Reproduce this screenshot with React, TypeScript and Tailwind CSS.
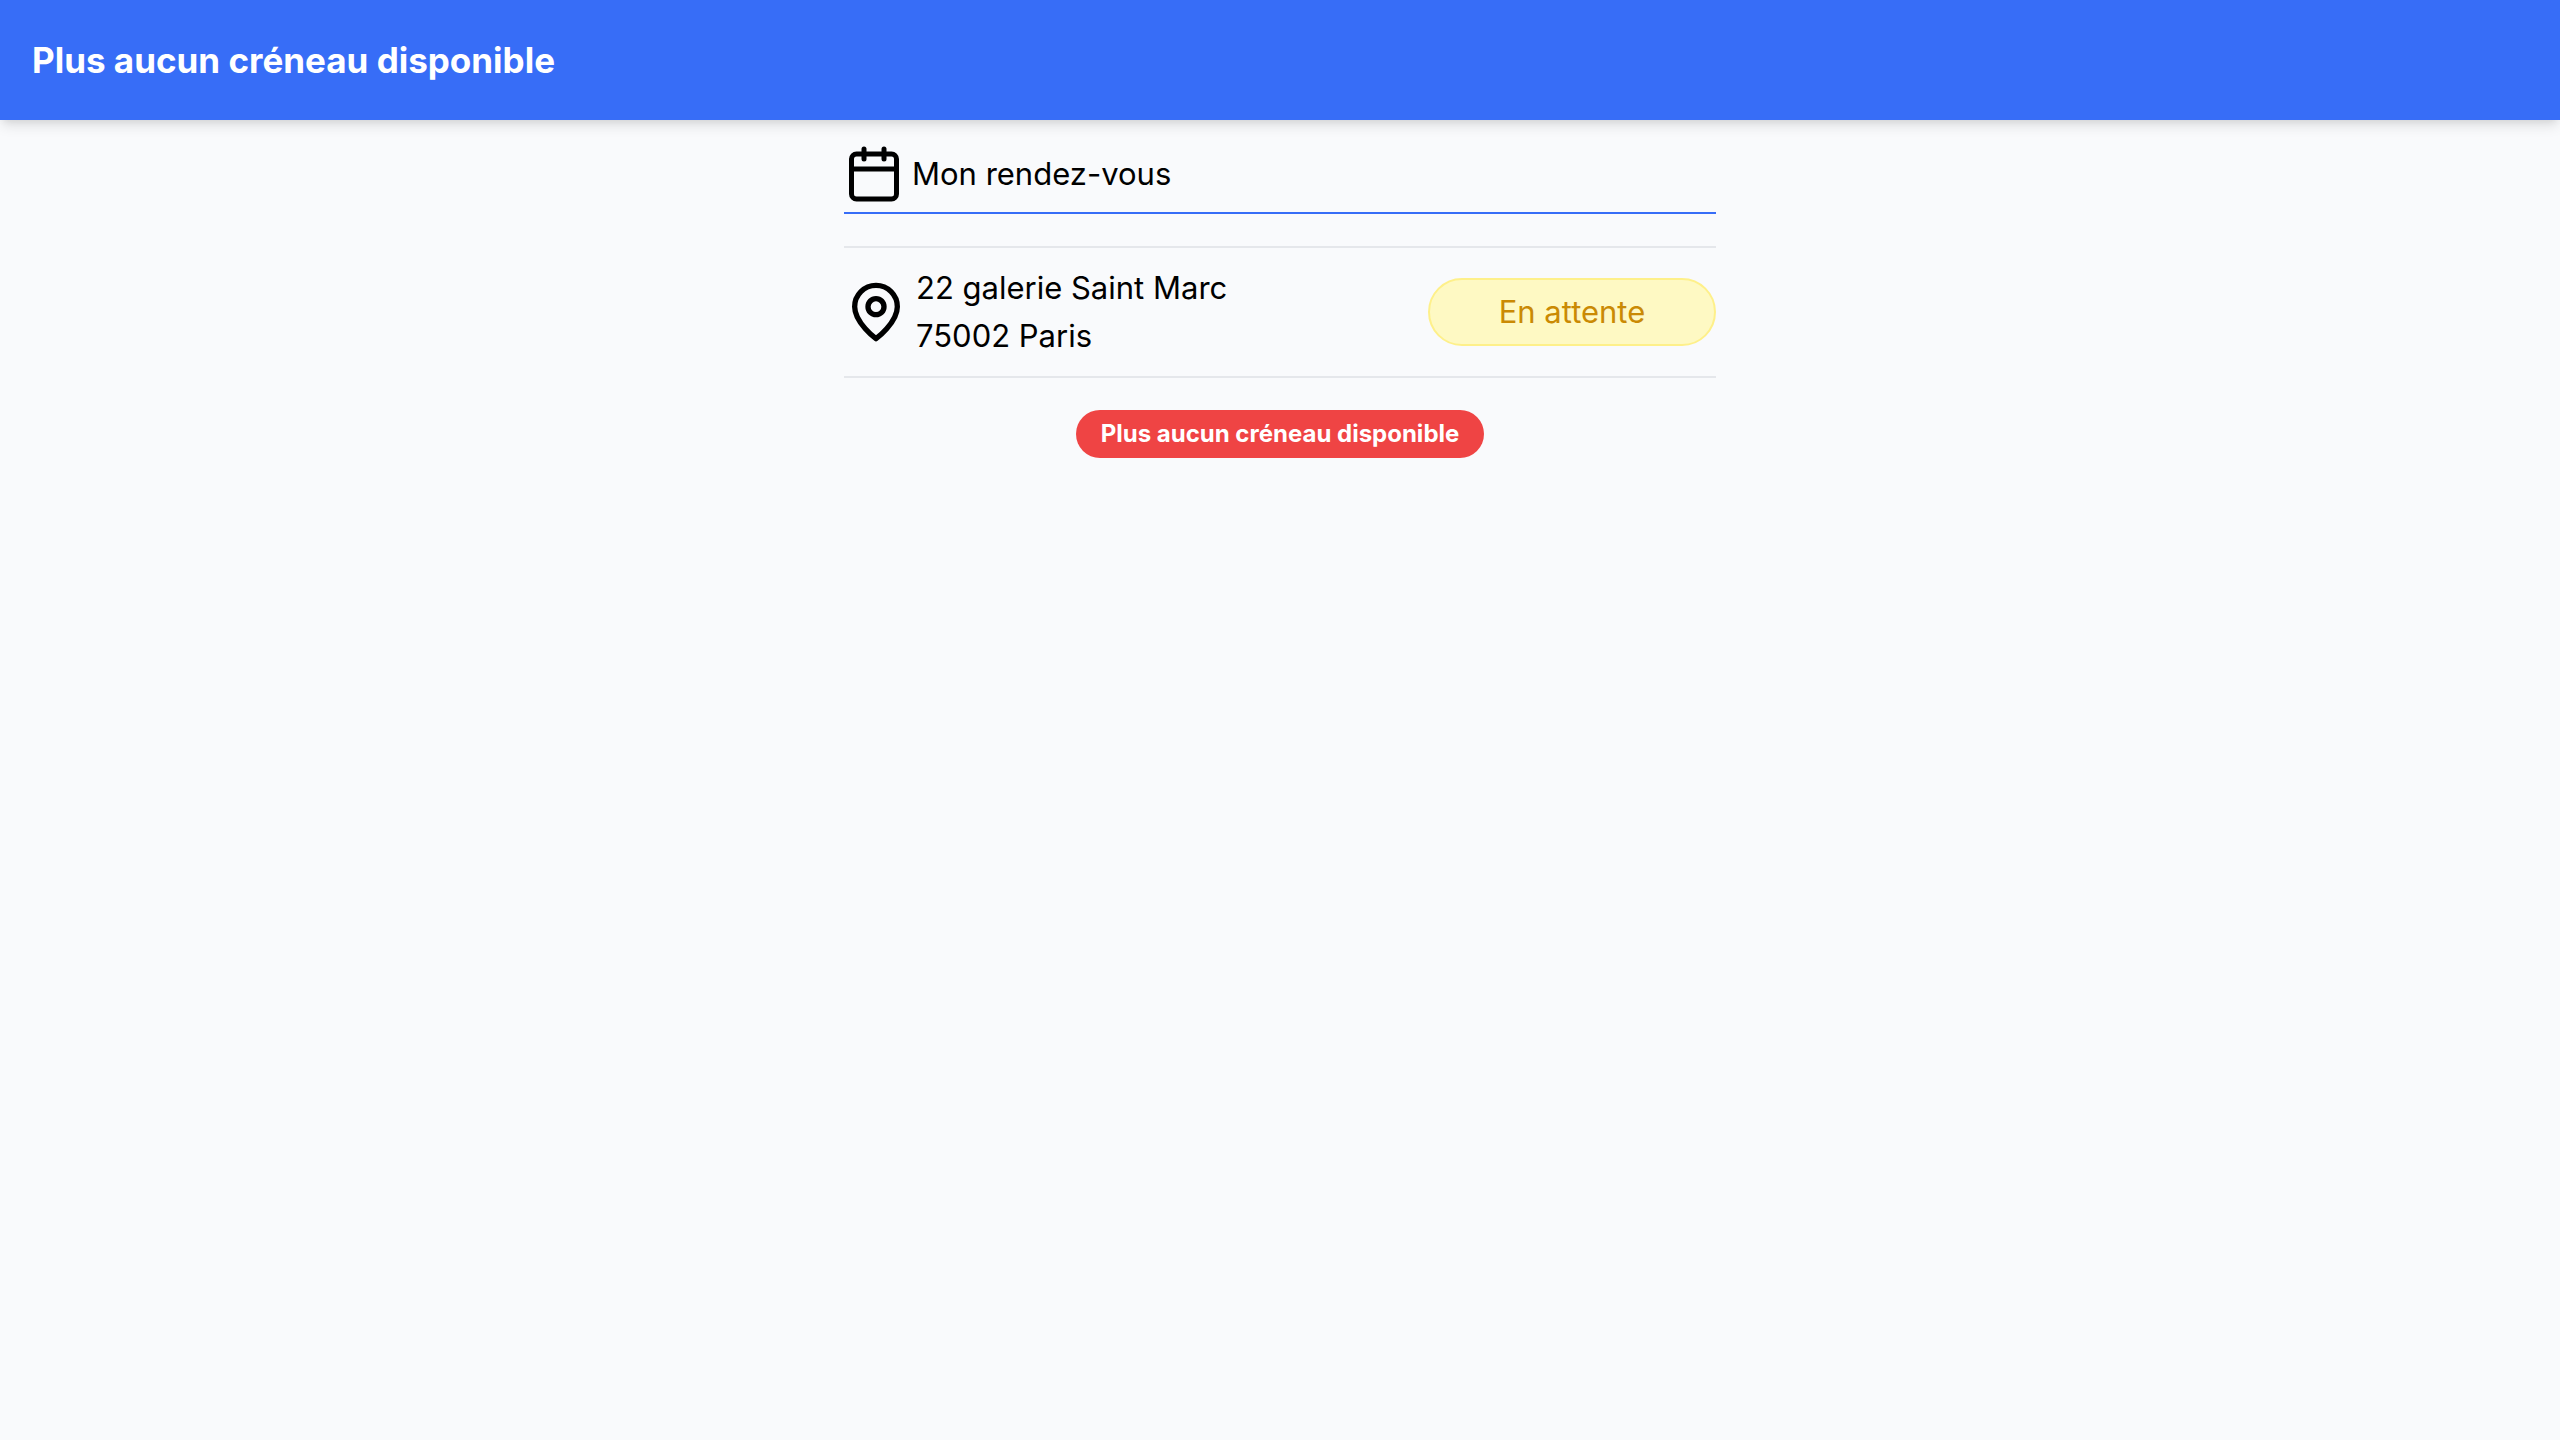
import React from "react";
import { Calendar } from "lucide-react";

function PinIcon() {
  return (
    <svg
      viewBox="0 0 24 24"
      fill="none"
      stroke="currentColor"
      strokeWidth="2"
      strokeLinecap="round"
      strokeLinejoin="round"
      className="size-16 shrink-0"
      aria-hidden="true"
    >
      <path d="M20 10c0 6-8 12-8 12s-8-6-8-12a8 8 0 0 1 16 0Z" />
      <circle cx="12" cy="10" r="3" />
    </svg>
  );
}

export default function App() {
  return (
    <div className="min-h-screen bg-[#f9fafc] font-['Inter','Noto_Sans',sans-serif] text-black">
      <header className="bg-[#376df7] p-8 shadow-[0_8px_12px_-2px_rgba(0,0,0,0.1),0_4px_8px_-4px_rgba(0,0,0,0.1)]">
        <h1 className="text-[35px] leading-[56px] font-bold text-white">Plus aucun créneau disponible</h1>
      </header>
      <main className="mx-auto w-full max-w-[872px] pt-6">
        <h2 className="flex items-center gap-2 border-b-2 border-[#376df7] pb-2 text-[31px] leading-[48px]">
          <Calendar size={60} strokeWidth={2} className="shrink-0" aria-hidden="true" />
          Mon rendez-vous
        </h2>
        <section className="mt-8 flex items-center gap-2 border-y-2 border-gray-200 py-4 text-[31px] leading-[48px]">
          <PinIcon />
          <address className="grow not-italic">
            22 galerie Saint Marc
            <br />
            75002 Paris
          </address>
          <span className="w-72 rounded-full border-2 border-[#fef08a] bg-[#fef9c3] py-2 text-center text-[#ca8a04]">
            En attente
          </span>
        </section>
        <div className="mt-8 flex justify-center">
          <p className="rounded-full bg-[#ef4444] px-[25px] text-2xl leading-[48px] font-bold text-white">
            Plus aucun créneau disponible
          </p>
        </div>
      </main>
    </div>
  );
}
